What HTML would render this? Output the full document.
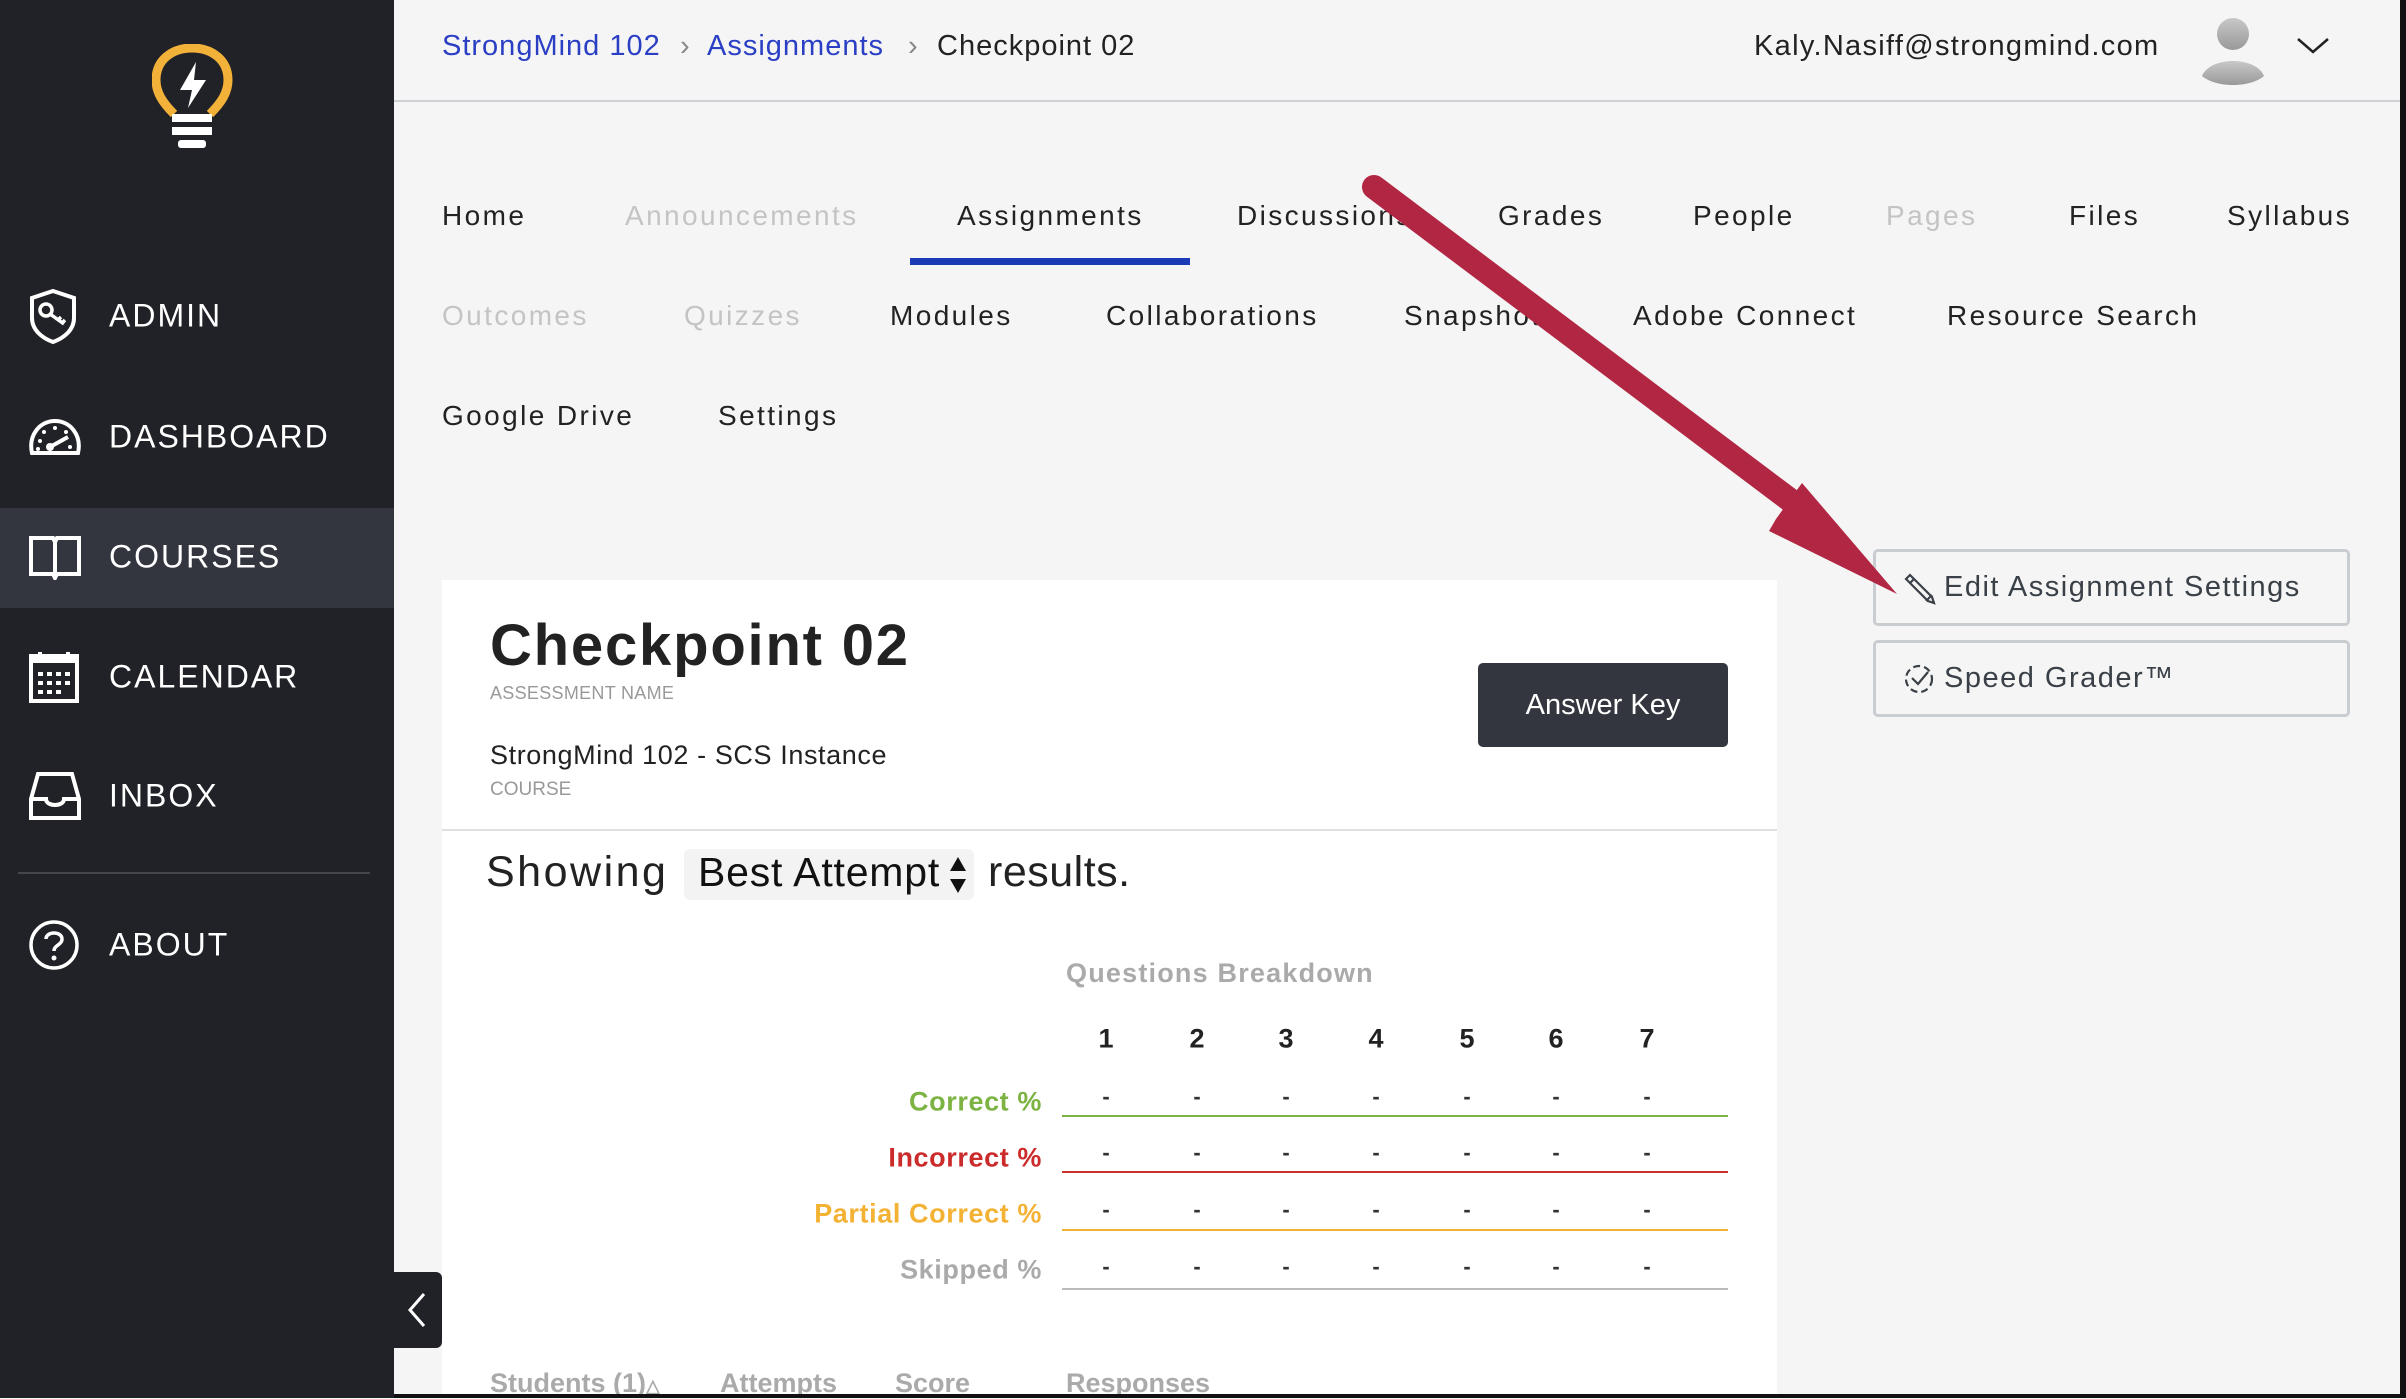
<!DOCTYPE html>
<html><head><meta charset="utf-8"><style>
*{margin:0;padding:0;box-sizing:border-box}
body{width:2406px;height:1398px;position:relative;overflow:hidden;background:#f5f5f5;font-family:"Liberation Sans",sans-serif}
.a{position:absolute;white-space:nowrap}
#side{position:absolute;left:0;top:0;width:394px;height:1398px;background:#212227}
.mi{position:absolute;left:109px;color:#fff;font-size:32px;letter-spacing:2px;transform:translateY(-50%)}
.ic{position:absolute;left:28px;transform:translateY(-50%)}
.nav{position:absolute;font-size:28px;color:#222;transform:translateY(-50%);white-space:nowrap;letter-spacing:2.4px}
.dim{color:#c4c4c4}
.bc{position:absolute;top:30px;font-size:29px;letter-spacing:1px}
.lbl{position:absolute;right:1364px;font-size:27px;font-weight:bold;transform:translateY(-50%);letter-spacing:0.6px}
.ln{position:absolute;left:1062px;width:666px;height:2px}
.d{position:absolute;font-size:22px;font-weight:bold;color:#333;transform:translate(-50%,-50%)}
.num{position:absolute;font-size:27px;font-weight:bold;color:#222;transform:translate(-50%,-50%)}
.btn{position:absolute;left:1873px;width:477px;height:77px;border:3px solid #c9cdd1;border-radius:5px;color:#3a4047;font-size:29px;padding-left:68px;line-height:71px;letter-spacing:1.5px}
</style></head><body>
<div id="side">
 <svg class="a" style="left:152px;top:44px" width="82" height="132" viewBox="0 0 82 132">
  <path d="M22 70 C10 58 4 48 4 36 C4 16 20 4 40 4 C60 4 76 16 76 36 C76 48 70 58 58 70" fill="none" stroke="#f2b23a" stroke-width="9"/>
  <path d="M44 18 L28 46 L40 46 L36 64 L54 36 L42 36 Z" fill="#fff"/>
  <rect x="20" y="70" width="40" height="8" fill="#fff"/>
  <rect x="20" y="83" width="40" height="8" fill="#fff"/>
  <rect x="26" y="96" width="28" height="8" rx="3" fill="#fff"/>
 </svg>
 <svg class="ic" style="top:316px" width="50" height="56" viewBox="0 0 50 56"><path d="M25 3 L46 10 L46 30 C46 42 36 50 25 54 C14 50 4 42 4 30 L4 10 Z" fill="none" stroke="#fff" stroke-width="4"/><circle cx="18" cy="22" r="6" fill="none" stroke="#fff" stroke-width="3.5"/><path d="M22 26 L36 36 M30 32 L33 29 M34 35 L37 32" stroke="#fff" stroke-width="3.5"/></svg>
 <div class="mi" style="top:316px">ADMIN</div>
 <svg class="ic" style="top:437px" width="54" height="40" viewBox="0 0 54 40"><path d="M4 36 C0 18 12 4 27 4 C42 4 54 18 50 36 Z" fill="none" stroke="#fff" stroke-width="4"/><path d="M22 30 L40 20" stroke="#fff" stroke-width="4"/><circle cx="22" cy="30" r="4" fill="#fff"/><g fill="#fff"><circle cx="12" cy="24" r="2"/><circle cx="16" cy="15" r="2"/><circle cx="27" cy="11" r="2"/><circle cx="38" cy="15" r="2"/><circle cx="42" cy="30" r="2"/><circle cx="10" cy="32" r="2"/></g></svg>
 <div class="mi" style="top:437px">DASHBOARD</div>
 <div class="a" style="left:0;top:508px;width:394px;height:100px;background:#33363f"></div>
 <svg class="ic" style="top:557px" width="54" height="46" viewBox="0 0 54 46"><path d="M3 4 L25 4 L27 8 L29 4 L51 4 L51 40 L29 40 L27 44 L25 40 L3 40 Z M27 8 L27 40" fill="none" stroke="#fff" stroke-width="4"/></svg>
 <div class="mi" style="top:557px">COURSES</div>
 <svg class="ic" style="top:677px" width="52" height="54" viewBox="0 0 52 54"><rect x="3" y="6" width="46" height="45" fill="none" stroke="#fff" stroke-width="4"/><rect x="3" y="6" width="46" height="7" fill="#fff"/><path d="M12 2 L12 9 M40 2 L40 9" stroke="#fff" stroke-width="4"/><g fill="#fff"><rect x="10" y="22" width="5" height="4"/><rect x="19" y="22" width="5" height="4"/><rect x="28" y="22" width="5" height="4"/><rect x="37" y="22" width="5" height="4"/><rect x="10" y="31" width="5" height="4"/><rect x="19" y="31" width="5" height="4"/><rect x="28" y="31" width="5" height="4"/><rect x="37" y="31" width="5" height="4"/><rect x="10" y="40" width="5" height="4"/><rect x="19" y="40" width="5" height="4"/><rect x="28" y="40" width="5" height="4"/></g></svg>
 <div class="mi" style="top:677px">CALENDAR</div>
 <svg class="ic" style="top:796px" width="54" height="50" viewBox="0 0 54 50"><path d="M10 3 L44 3 L51 28 L51 47 L3 47 L3 28 Z M3 28 L18 28 C18 36 36 36 36 28 L51 28" fill="none" stroke="#fff" stroke-width="4"/></svg>
 <div class="mi" style="top:796px">INBOX</div>
 <div class="a" style="left:18px;top:872px;width:352px;height:2px;background:#44464d"></div>
 <svg class="ic" style="top:945px" width="52" height="52" viewBox="0 0 52 52"><circle cx="26" cy="26" r="23" fill="none" stroke="#fff" stroke-width="3.5"/><path d="M18 20 C18 12 34 12 34 20 C34 26 26 26 26 32" fill="none" stroke="#fff" stroke-width="3.5"/><circle cx="26" cy="39" r="2.5" fill="#fff"/></svg>
 <div class="mi" style="top:945px">ABOUT</div>
</div>
<div class="a" style="left:394px;top:1272px;width:48px;height:76px;background:#212227;border-radius:0 6px 6px 0"></div>
<svg class="a" style="left:404px;top:1290px" width="24" height="40" viewBox="0 0 24 40"><path d="M20 4 L6 20 L20 36" fill="none" stroke="#fff" stroke-width="3"/></svg>

<div class="bc" style="left:442px;color:#2a3fc4">StrongMind 102</div>
<div class="bc" style="left:680px;color:#888">›</div>
<div class="bc" style="left:707px;color:#2a3fc4">Assignments</div>
<div class="bc" style="left:908px;color:#888">›</div>
<div class="bc" style="left:937px;color:#222">Checkpoint 02</div>
<div class="a" style="left:1754px;top:30px;font-size:29px;color:#222;letter-spacing:1.3px">Kaly.Nasiff@strongmind.com</div>
<svg class="a" style="left:2200px;top:14px" width="66" height="72" viewBox="0 0 66 72"><defs><linearGradient id="g" x1="0" y1="0" x2="0" y2="1"><stop offset="0" stop-color="#c8c8c8"/><stop offset="1" stop-color="#999"/></linearGradient></defs><circle cx="33" cy="20" r="16" fill="url(#g)"/><path d="M2 62 C10 42 56 42 64 62 C50 74 16 74 2 62Z" fill="url(#g)"/></svg>
<svg class="a" style="left:2296px;top:36px" width="34" height="20" viewBox="0 0 34 20"><path d="M2 3 L17 16 L32 3" fill="none" stroke="#222" stroke-width="2.5"/></svg>
<div class="a" style="left:394px;top:100px;width:2006px;height:2px;background:#cdd1d5"></div>

<div class="nav" style="left:442px;top:216px">Home</div>
<div class="nav dim" style="left:625px;top:216px">Announcements</div>
<div class="nav" style="left:957px;top:216px">Assignments</div>
<div class="a" style="left:910px;top:258px;width:280px;height:7px;background:#1b3bb6"></div>
<div class="nav" style="left:1237px;top:216px">Discussions</div>
<div class="nav" style="left:1498px;top:216px">Grades</div>
<div class="nav" style="left:1693px;top:216px">People</div>
<div class="nav dim" style="left:1886px;top:216px">Pages</div>
<div class="nav" style="left:2069px;top:216px">Files</div>
<div class="nav" style="left:2227px;top:216px">Syllabus</div>
<div class="nav dim" style="left:442px;top:316px">Outcomes</div>
<div class="nav dim" style="left:684px;top:316px">Quizzes</div>
<div class="nav" style="left:890px;top:316px">Modules</div>
<div class="nav" style="left:1106px;top:316px">Collaborations</div>
<div class="nav" style="left:1404px;top:316px">Snapshot</div>
<div class="nav" style="left:1633px;top:316px">Adobe Connect</div>
<div class="nav" style="left:1947px;top:316px">Resource Search</div>
<div class="nav" style="left:442px;top:416px">Google Drive</div>
<div class="nav" style="left:718px;top:416px">Settings</div>

<div class="a" style="left:442px;top:580px;width:1335px;height:818px;background:#fff"></div>
<div class="a" style="left:490px;top:612px;font-size:58px;font-weight:bold;color:#222;letter-spacing:1.8px">Checkpoint 02</div>
<div class="a" style="left:490px;top:683px;font-size:18px;color:#999;letter-spacing:0.3px">ASSESSMENT NAME</div>
<div class="a" style="left:490px;top:740px;font-size:27px;color:#222;letter-spacing:0.6px">StrongMind 102 - SCS Instance</div>
<div class="a" style="left:490px;top:779px;font-size:19px;color:#999">COURSE</div>
<div class="a" style="left:1478px;top:663px;width:250px;height:84px;background:#33363e;border-radius:5px;color:#fff;font-size:29px;text-align:center;line-height:84px">Answer Key</div>
<div class="a" style="left:442px;top:829px;width:1335px;height:2px;background:#e0e0e0"></div>
<div class="a" style="left:486px;top:848px;font-size:43px;color:#222;letter-spacing:2.5px">Showing</div>
<div class="a" style="left:684px;top:849px;width:290px;height:51px;background:#f3f3f3;border-radius:6px"></div>
<div class="a" style="left:698px;top:849px;font-size:41px;color:#111;letter-spacing:0.8px">Best Attempt</div>
<svg class="a" style="left:948px;top:855px" width="20" height="40" viewBox="0 0 20 40"><path d="M10 2 L18 16 L2 16Z M10 38 L18 24 L2 24Z" fill="#111"/></svg>
<div class="a" style="left:988px;top:848px;font-size:43px;color:#222;letter-spacing:0.5px">results.</div>

<div class="a" style="left:1066px;top:958px;font-size:27px;font-weight:bold;color:#aaa;letter-spacing:1.2px">Questions Breakdown</div>
<div class="num" style="left:1106px;top:1039px">1</div><div class="num" style="left:1197px;top:1039px">2</div><div class="num" style="left:1286px;top:1039px">3</div><div class="num" style="left:1376px;top:1039px">4</div><div class="num" style="left:1467px;top:1039px">5</div><div class="num" style="left:1556px;top:1039px">6</div><div class="num" style="left:1647px;top:1039px">7</div>

<div class="lbl" style="top:1102px;color:#7cb342">Correct %</div>
<div class="ln" style="top:1115px;background:#7cb342"></div>
<div class="lbl" style="top:1158px;color:#cc2b2b">Incorrect %</div>
<div class="ln" style="top:1171px;background:#c9302c"></div>
<div class="lbl" style="top:1214px;color:#f3b234">Partial Correct %</div>
<div class="ln" style="top:1229px;background:#f0b238"></div>
<div class="lbl" style="top:1270px;color:#aaa">Skipped %</div>
<div class="ln" style="top:1288px;background:#bbb"></div>

<div id="dashes"></div>
<script>
var xs=[1106,1197,1286,1376,1467,1556,1647],ys=[1097,1153,1210,1267],h='';
ys.forEach(function(y){xs.forEach(function(x){h+='<div class="d" style="left:'+x+'px;top:'+y+'px">-</div>';});});
document.getElementById('dashes').outerHTML=h;
</script>

<div class="a" style="left:490px;top:1368px;font-size:27px;font-weight:bold;color:#aaa">Students (1)<span style="font-size:18px">△</span></div>
<div class="a" style="left:720px;top:1368px;font-size:27px;font-weight:bold;color:#aaa">Attempts</div>
<div class="a" style="left:895px;top:1368px;font-size:27px;font-weight:bold;color:#aaa">Score</div>
<div class="a" style="left:1066px;top:1368px;font-size:27px;font-weight:bold;color:#aaa">Responses</div>

<div class="btn" style="top:549px">Edit Assignment Settings</div>
<svg class="a" style="left:1902px;top:571px" width="34" height="34" viewBox="0 0 34 34"><path d="M4 8 L8 4 L30 26 L32 32 L26 30 Z M8 12 L12 8 M24 30 L30 24" fill="none" stroke="#3a4047" stroke-width="2.2"/></svg>
<div class="btn" style="top:640px">Speed Grader™</div>
<svg class="a" style="left:1902px;top:662px" width="34" height="34" viewBox="0 0 34 34"><circle cx="17" cy="17" r="13" fill="none" stroke="#3a4047" stroke-width="2.2" stroke-dasharray="7 4"/><path d="M10 16 L16 22 L26 10" fill="none" stroke="#3a4047" stroke-width="2.2"/></svg>

<svg class="a" style="left:0;top:0" width="2406" height="1398" viewBox="0 0 2406 1398">
 <path d="M1374 187 L1790 500" stroke="#b12642" stroke-width="24" stroke-linecap="round"/>
 <path d="M1897 594 L1769 531 L1776 519 L1794 494 L1802 483 Z" fill="#b12642"/>
</svg>
<div class="a" style="left:2400px;top:0;width:6px;height:1398px;background:#111"></div>
<div class="a" style="left:394px;top:1394px;width:2012px;height:4px;background:#111"></div>
</body></html>
